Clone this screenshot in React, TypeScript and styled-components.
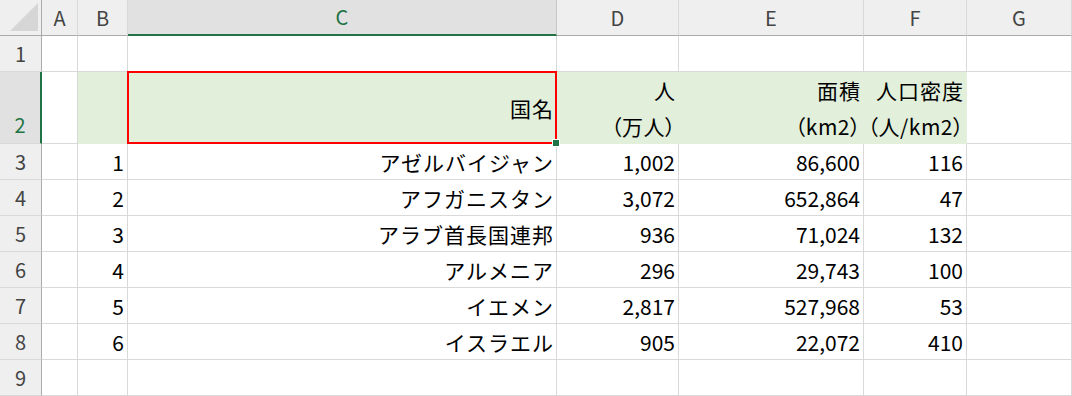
import React from "react";
import styled, { createGlobalStyle, css } from "styled-components";

const GlobalStyle = createGlobalStyle`
  html, body {
    margin: 0;
    padding: 0;
    background: #ffffff;
  }
  body {
    font-family: "Noto Sans CJK JP", "Noto Sans", sans-serif;
  }
`;

const FILL = "#e2efda";
const GRID = "#d9d9d9";
const HEAD_LINE = "#ababab";
const GREEN = "#217346";

const columns = ["A", "B", "C", "D", "E", "F", "G"];
const widths = [36, 50, 429, 122, 185, 103, 105];

const Sheet = styled.div`
  display: grid;
  grid-template-columns: 42px ${widths.map((w) => `${w}px`).join(" ")};
  grid-template-rows: 36px 36px 72px repeat(7, 36px);
  width: 1072px;
  height: 396px;
  overflow: hidden;
  font-size: 21px;
  color: #000;
`;

const Corner = styled.div`
  background: #efefef;
  border-right: 1px solid ${HEAD_LINE};
  border-bottom: 1px solid ${HEAD_LINE};
  box-sizing: border-box;
  display: flex;
  align-items: flex-end;
  justify-content: flex-end;
  padding: 0 3px 4px 0;
`;

const ColHead = styled.div<{ $active?: boolean }>`
  box-sizing: border-box;
  background: ${(p) => (p.$active ? "#e1e1e1" : "#efefef")};
  border-right: 1px solid ${(p) => (p.$active ? "#c6c6c6" : GRID)};
  border-bottom: ${(p) => (p.$active ? `2px solid ${GREEN}` : `1px solid ${HEAD_LINE}`)};
  color: ${(p) => (p.$active ? GREEN : "#444")};
  display: flex;
  align-items: center;
  justify-content: center;
  font-size: 20px;
  padding-bottom: 1px;
`;

const RowHead = styled.div<{ $active?: boolean }>`
  box-sizing: border-box;
  background: ${(p) => (p.$active ? "#e1e1e1" : "#efefef")};
  border-right: ${(p) => (p.$active ? `2px solid ${GREEN}` : `1px solid ${HEAD_LINE}`)};
  border-bottom: 1px solid ${GRID};
  color: ${(p) => (p.$active ? GREEN : "#444")};
  display: flex;
  align-items: ${(p) => (p.$active ? "flex-end" : "center")};
  justify-content: center;
  font-size: 20px;
  padding-bottom: ${(p) => (p.$active ? "4px" : "0")};
`;

const Cell = styled.div<{ $filled?: boolean; $selected?: boolean }>`
  box-sizing: border-box;
  position: relative;
  border-right: 1px solid ${GRID};
  border-bottom: 1px solid ${GRID};
  display: flex;
  flex-direction: column;
  justify-content: center;
  align-items: flex-end;
  padding-right: 3px;
  line-height: 36px;
  white-space: nowrap;
  ${(p) =>
    p.$filled &&
    css`
      background: ${FILL};
      border-color: ${FILL};
    `}
  ${(p) =>
    p.$selected &&
    css`
      &::after {
        content: "";
        position: absolute;
        left: -1px;
        top: -1px;
        right: -1px;
        bottom: -1px;
        border: 2px solid #ff0000;
        pointer-events: none;
      }
    `}
`;

const Jp = styled.span<{ $narrow?: boolean }>`
  letter-spacing: 1px;
  margin-right: -1px;
  ${(p) =>
    p.$narrow &&
    css`
      font-feature-settings: "palt";
      letter-spacing: 0.5px;
    `}
`;

const FillHandle = styled.span`
  position: absolute;
  right: -4px;
  bottom: -4px;
  width: 6px;
  height: 6px;
  background: ${GREEN};
  border: 1px solid #ffffff;
  z-index: 2;
`;

type Row = { no: string; name: string; pop: string; area: string; dens: string };

const rows: Row[] = [
  { no: "1", name: "アゼルバイジャン", pop: "1,002", area: "86,600", dens: "116" },
  { no: "2", name: "アフガニスタン", pop: "3,072", area: "652,864", dens: "47" },
  { no: "3", name: "アラブ首長国連邦", pop: "936", area: "71,024", dens: "132" },
  { no: "4", name: "アルメニア", pop: "296", area: "29,743", dens: "100" },
  { no: "5", name: "イエメン", pop: "2,817", area: "527,968", dens: "53" },
  { no: "6", name: "イスラエル", pop: "905", area: "22,072", dens: "410" },
];

const App = () => {
  return (
    <>
      <GlobalStyle />
      <Sheet>
        <Corner>
          <svg width="28" height="28" viewBox="0 0 28 28">
            <polygon points="28,0 28,28 0,28" fill="#d6d6d6" />
          </svg>
        </Corner>
        {columns.map((c) => (
          <ColHead key={c} $active={c === "C"}>
            {c}
          </ColHead>
        ))}

        <RowHead>1</RowHead>
        {columns.map((c) => (
          <Cell key={c} />
        ))}

        <RowHead $active>2</RowHead>
        <Cell />
        <Cell $filled />
        <Cell $filled $selected>
          <Jp>国名</Jp>
          <FillHandle />
        </Cell>
        <Cell $filled>
          <Jp>人</Jp>
          <Jp $narrow>（万人）</Jp>
        </Cell>
        <Cell $filled>
          <Jp>面積</Jp>
          <Jp $narrow>（km2）</Jp>
        </Cell>
        <Cell $filled>
          <Jp>人口密度</Jp>
          <Jp $narrow>（人/km2）</Jp>
        </Cell>
        <Cell />

        {rows.map((r, i) => (
          <React.Fragment key={r.no}>
            <RowHead>{i + 3}</RowHead>
            <Cell />
            <Cell>{r.no}</Cell>
            <Cell>
              <Jp>{r.name}</Jp>
            </Cell>
            <Cell>{r.pop}</Cell>
            <Cell>{r.area}</Cell>
            <Cell>{r.dens}</Cell>
            <Cell />
          </React.Fragment>
        ))}

        <RowHead>9</RowHead>
        {columns.map((c) => (
          <Cell key={c} />
        ))}
      </Sheet>
    </>
  );
};

export default App;
